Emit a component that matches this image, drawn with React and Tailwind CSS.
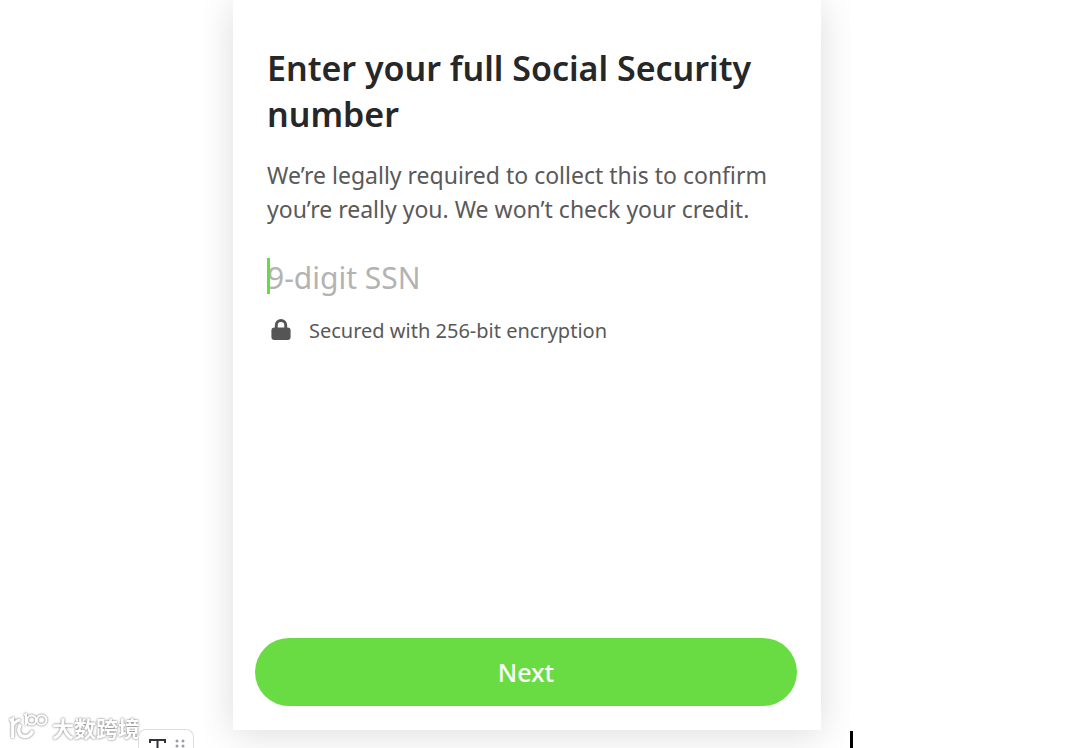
function LockIcon() {
  return (
    <svg viewBox="0 0 20 22" className="h-[22px] w-5 shrink-0 overflow-visible" aria-hidden="true">
      <path d="M5.3 9.4V5.2a4.7 4.7 0 0 1 9.4 0v4.2" fill="none" stroke="#555555" strokeWidth="2.9" />
      <rect x="0.4" y="7.6" width="19.2" height="12.4" rx="3" fill="#555555" />
    </svg>
  );
}

function Watermark() {
  return (
    <div className="absolute bottom-[6px] left-[9px] flex items-center gap-1 drop-shadow-[0_0_1px_#666666]">
      <svg viewBox="0 0 39 30" className="h-[30px] w-[39px] overflow-visible" fill="none" stroke="#ffffff" aria-hidden="true">
        <path d="M0.8 8.6 3.6 7V26" strokeWidth="3" />
        <path d="M4 13.5Q5.5 9 11.5 8" strokeWidth="2.8" />
        <path d="M11.5 12.5c-3.6 6-1 12 4.4 12 3.8 0 6.6-2.4 7.6-6" strokeWidth="3.4" />
        <path d="M15 3.4 17 2.4V13" strokeWidth="2" />
        <circle cx="22.6" cy="8" r="4.5" strokeWidth="2" />
        <circle cx="32.6" cy="8" r="4.8" strokeWidth="2" />
      </svg>
      <span className="font-['Noto_Sans_CJK_SC',sans-serif] text-[22px] leading-[30px] font-bold text-white">
        大数跨境
      </span>
    </div>
  );
}

function BlockHandle() {
  return (
    <div className="absolute bottom-0 left-[138px] flex h-[19px] w-14 items-start gap-[9px] overflow-hidden rounded-t-lg border border-b-0 border-[#dddddd] bg-white px-[10px] pt-2">
      <svg viewBox="0 0 17 16" className="h-4 w-[17px] shrink-0" fill="none" stroke="#30343a" strokeWidth="2" aria-hidden="true">
        <path d="M1 5V2h15v3M8.5 2v13M5.5 15h6" />
      </svg>
      <svg viewBox="0 0 10 16" className="h-4 w-[10px] shrink-0" fill="#9a9da3" aria-hidden="true">
        <circle cx="2" cy="3" r="1.5" />
        <circle cx="8" cy="3" r="1.5" />
        <circle cx="2" cy="8" r="1.5" />
        <circle cx="8" cy="8" r="1.5" />
      </svg>
    </div>
  );
}

export default function App() {
  return (
    <div className="relative min-h-screen overflow-hidden bg-white font-['Noto_Sans',sans-serif]">
      <div className="ml-[203px] w-fit max-w-full overflow-hidden px-[30px] pb-[18px]">
        <form
          onSubmit={(event) => event.preventDefault()}
          className="flex min-h-[730px] max-w-[588px] flex-col bg-white pt-[45px] pr-6 pb-6 pl-[22px] shadow-[0_4px_36px_rgba(0,0,0,0.14)]"
        >
          <div className="px-3">
            <h1 className="text-[34px] leading-[46px] font-semibold text-[#272727]">
              Enter your full Social Security number
            </h1>
            <p className="mt-[21px] text-[23px] leading-[34px] text-[#595959]">
              We’re legally required to collect this to confirm you’re really you. We won’t check your credit.
            </p>
            <div className="relative mt-8 flex">
              <span className="absolute top-0 left-0 h-9 w-[3px] bg-[#65dc43]" />
              <input
                type="text"
                inputMode="numeric"
                aria-label="9-digit SSN"
                placeholder="9-digit SSN"
                className="h-10 w-full bg-transparent text-[30px] leading-10 text-[#272727] outline-none placeholder:text-[#b3b3b3]"
              />
            </div>
            <div className="mt-4 flex items-center gap-[18px] pl-1">
              <LockIcon />
              <span className="text-[20px] leading-[34px] text-[#595959]">Secured with 256-bit encryption</span>
            </div>
          </div>
          <button type="submit" className="mt-auto h-[68px] w-full rounded-full bg-[#69dc43] pt-0.5 text-[25px] font-medium text-white">
            Next
          </button>
        </form>
      </div>
      <Watermark />
      <BlockHandle />
      <span className="absolute bottom-0 left-[850px] h-[17px] w-[3px] bg-black" />
    </div>
  );
}
